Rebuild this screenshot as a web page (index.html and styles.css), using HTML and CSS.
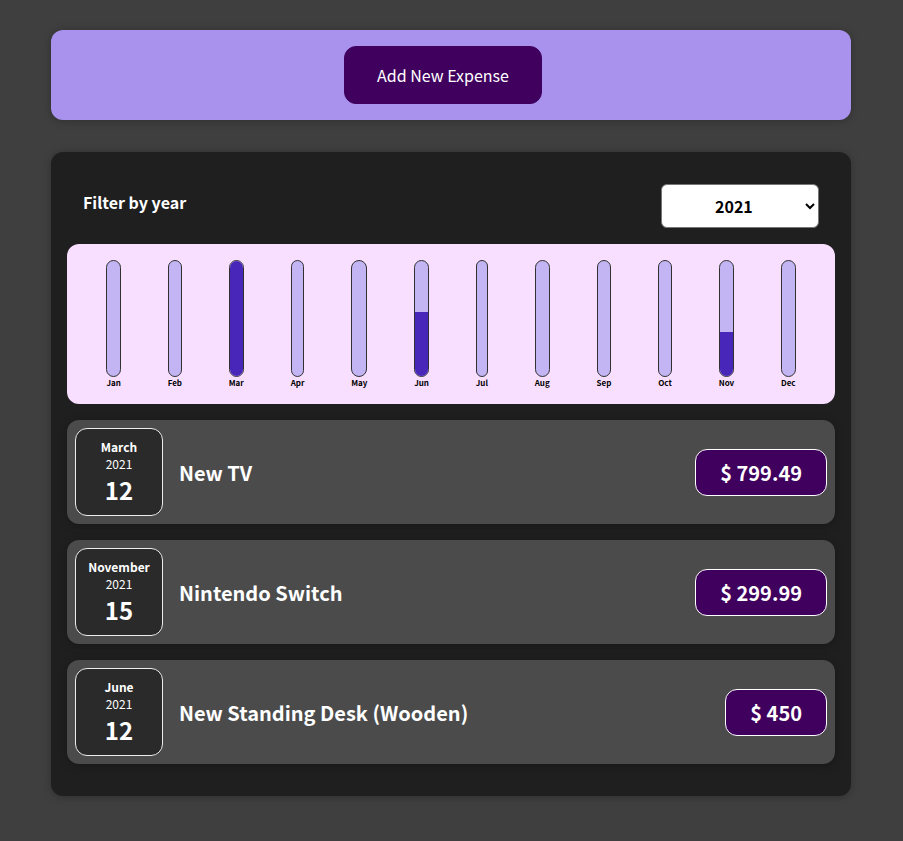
FILE: index.html
```html
<!DOCTYPE html>
<html lang="en">
<head>
<meta charset="utf-8">
<title>Expenses</title>
<link rel="stylesheet" href="styles.css">
</head>
<body>
<div class="root">
  <div class="new-expense">
    <button type="button">Add New Expense</button>
  </div>
  <div class="card expenses">
    <div class="expenses-filter">
      <div class="expenses-filter__control">
        <label>Filter by year</label>
        <select>
          <option>2022</option>
          <option selected>2021</option>
          <option>2020</option>
          <option>2019</option>
        </select>
      </div>
    </div>
    <div class="chart">
      <div class="chart-bar"><div class="chart-bar__inner"><div class="chart-bar__fill" style="height:0%"></div></div><div class="chart-bar__label">Jan</div></div>
      <div class="chart-bar"><div class="chart-bar__inner"><div class="chart-bar__fill" style="height:0%"></div></div><div class="chart-bar__label">Feb</div></div>
      <div class="chart-bar"><div class="chart-bar__inner"><div class="chart-bar__fill" style="height:100%"></div></div><div class="chart-bar__label">Mar</div></div>
      <div class="chart-bar"><div class="chart-bar__inner"><div class="chart-bar__fill" style="height:0%"></div></div><div class="chart-bar__label">Apr</div></div>
      <div class="chart-bar"><div class="chart-bar__inner"><div class="chart-bar__fill" style="height:0%"></div></div><div class="chart-bar__label">May</div></div>
      <div class="chart-bar"><div class="chart-bar__inner"><div class="chart-bar__fill" style="height:56%"></div></div><div class="chart-bar__label">Jun</div></div>
      <div class="chart-bar"><div class="chart-bar__inner"><div class="chart-bar__fill" style="height:0%"></div></div><div class="chart-bar__label">Jul</div></div>
      <div class="chart-bar"><div class="chart-bar__inner"><div class="chart-bar__fill" style="height:0%"></div></div><div class="chart-bar__label">Aug</div></div>
      <div class="chart-bar"><div class="chart-bar__inner"><div class="chart-bar__fill" style="height:0%"></div></div><div class="chart-bar__label">Sep</div></div>
      <div class="chart-bar"><div class="chart-bar__inner"><div class="chart-bar__fill" style="height:0%"></div></div><div class="chart-bar__label">Oct</div></div>
      <div class="chart-bar"><div class="chart-bar__inner"><div class="chart-bar__fill" style="height:38%"></div></div><div class="chart-bar__label">Nov</div></div>
      <div class="chart-bar"><div class="chart-bar__inner"><div class="chart-bar__fill" style="height:0%"></div></div><div class="chart-bar__label">Dec</div></div>
    </div>
    <ul class="expenses-list">
      <li class="card expense-item">
        <div class="expense-date">
          <div class="expense-date__month">March</div>
          <div class="expense-date__year">2021</div>
          <div class="expense-date__day">12</div>
        </div>
        <div class="expense-item__description">
          <h2>New TV</h2>
          <div class="expense-item__price">$ 799.49</div>
        </div>
      </li>
      <li class="card expense-item">
        <div class="expense-date">
          <div class="expense-date__month">November</div>
          <div class="expense-date__year">2021</div>
          <div class="expense-date__day">15</div>
        </div>
        <div class="expense-item__description">
          <h2>Nintendo Switch</h2>
          <div class="expense-item__price">$ 299.99</div>
        </div>
      </li>
      <li class="card expense-item">
        <div class="expense-date">
          <div class="expense-date__month">June</div>
          <div class="expense-date__year">2021</div>
          <div class="expense-date__day">12</div>
        </div>
        <div class="expense-item__description">
          <h2>New Standing Desk (Wooden)</h2>
          <div class="expense-item__price">$ 450</div>
        </div>
      </li>
    </ul>
  </div>
</div>
</body>
</html>
```

FILE: styles.css
```css
* {
  box-sizing: border-box;
}

html {
  font-family: "Noto Sans CJK JP", "Noto Sans", sans-serif;
}

body {
  margin: 0;
  background-color: #3f3f3f;
}

.root {
  padding-top: 30px;
  padding-bottom: 1px;
  padding-right: 1px;
}

.card {
  border-radius: 12px;
  box-shadow: 0 1px 8px rgba(0, 0, 0, 0.25);
}

.new-expense {
  background-color: #a892ee;
  padding: 16px;
  margin: 0 auto 32px;
  width: 800px;
  max-width: 95%;
  border-radius: 12px;
  text-align: center;
  box-shadow: 0 1px 8px rgba(0, 0, 0, 0.25);
}

.new-expense button {
  font: inherit;
  cursor: pointer;
  padding: 16px 32px;
  border: 1px solid #40005d;
  background-color: #40005d;
  color: white;
  border-radius: 12px;
  margin-right: 16px;
}

.expenses {
  padding: 16px;
  background-color: #1f1f1f;
  margin: 0 auto 32px;
  width: 800px;
  max-width: 95%;
}

.expenses-filter {
  color: white;
  padding: 0 16px;
}

.expenses-filter__control {
  display: flex;
  width: 100%;
  align-items: center;
  justify-content: space-between;
  margin: 16px 0;
}

.expenses-filter label {
  font-weight: bold;
  margin-bottom: 8px;
}

.expenses-filter select {
  font: inherit;
  padding: 8px 49px;
  font-weight: bold;
  border-radius: 6px;
  height: 44px;
  background-color: #fff;
  color: #000;
  border: 1px solid #767676;
}

.chart {
  padding: 16px;
  border-radius: 12px;
  background-color: #f8dfff;
  text-align: center;
  display: flex;
  justify-content: space-around;
  height: 160px;
}

.chart-bar {
  height: 100%;
  display: flex;
  flex-direction: column;
  align-items: center;
}

.chart-bar__inner {
  height: 100%;
  width: 100%;
  border: 1px solid #313131;
  border-radius: 12px;
  background-color: #c3b4f3;
  overflow: hidden;
  display: flex;
  flex-direction: column;
  justify-content: flex-end;
}

.chart-bar__fill {
  background-color: #4826b9;
  width: 100%;
}

.chart-bar__label {
  font-weight: bold;
  font-size: 8px;
  text-align: center;
}

.expenses-list {
  list-style: none;
  padding: 0;
  margin: 0;
}

.expense-item {
  display: flex;
  justify-content: space-between;
  align-items: center;
  box-shadow: 0 2px 8px rgba(0, 0, 0, 0.25);
  padding: 8px;
  margin: 16px 0;
  background-color: #4b4b4b;
}

.expense-item__description {
  display: flex;
  flex-direction: row;
  align-items: center;
  justify-content: flex-start;
  flex: 1;
}

.expense-item h2 {
  font-size: 20px;
  flex: 1;
  margin: 0 16px;
  color: white;
}

.expense-item__price {
  font-size: 20px;
  font-weight: bold;
  color: white;
  background-color: #40005d;
  border: 1px solid white;
  padding: 8px 24px;
  border-radius: 12px;
}

.expense-date {
  display: flex;
  flex-direction: column;
  width: 88px;
  height: 88px;
  border: 1px solid #ececec;
  background-color: #2a2a2a;
  color: white;
  border-radius: 12px;
  align-items: center;
  justify-content: center;
}

.expense-date__month {
  font-size: 12px;
  font-weight: bold;
}

.expense-date__year {
  font-size: 12px;
}

.expense-date__day {
  font-size: 24px;
  font-weight: bold;
}
```
